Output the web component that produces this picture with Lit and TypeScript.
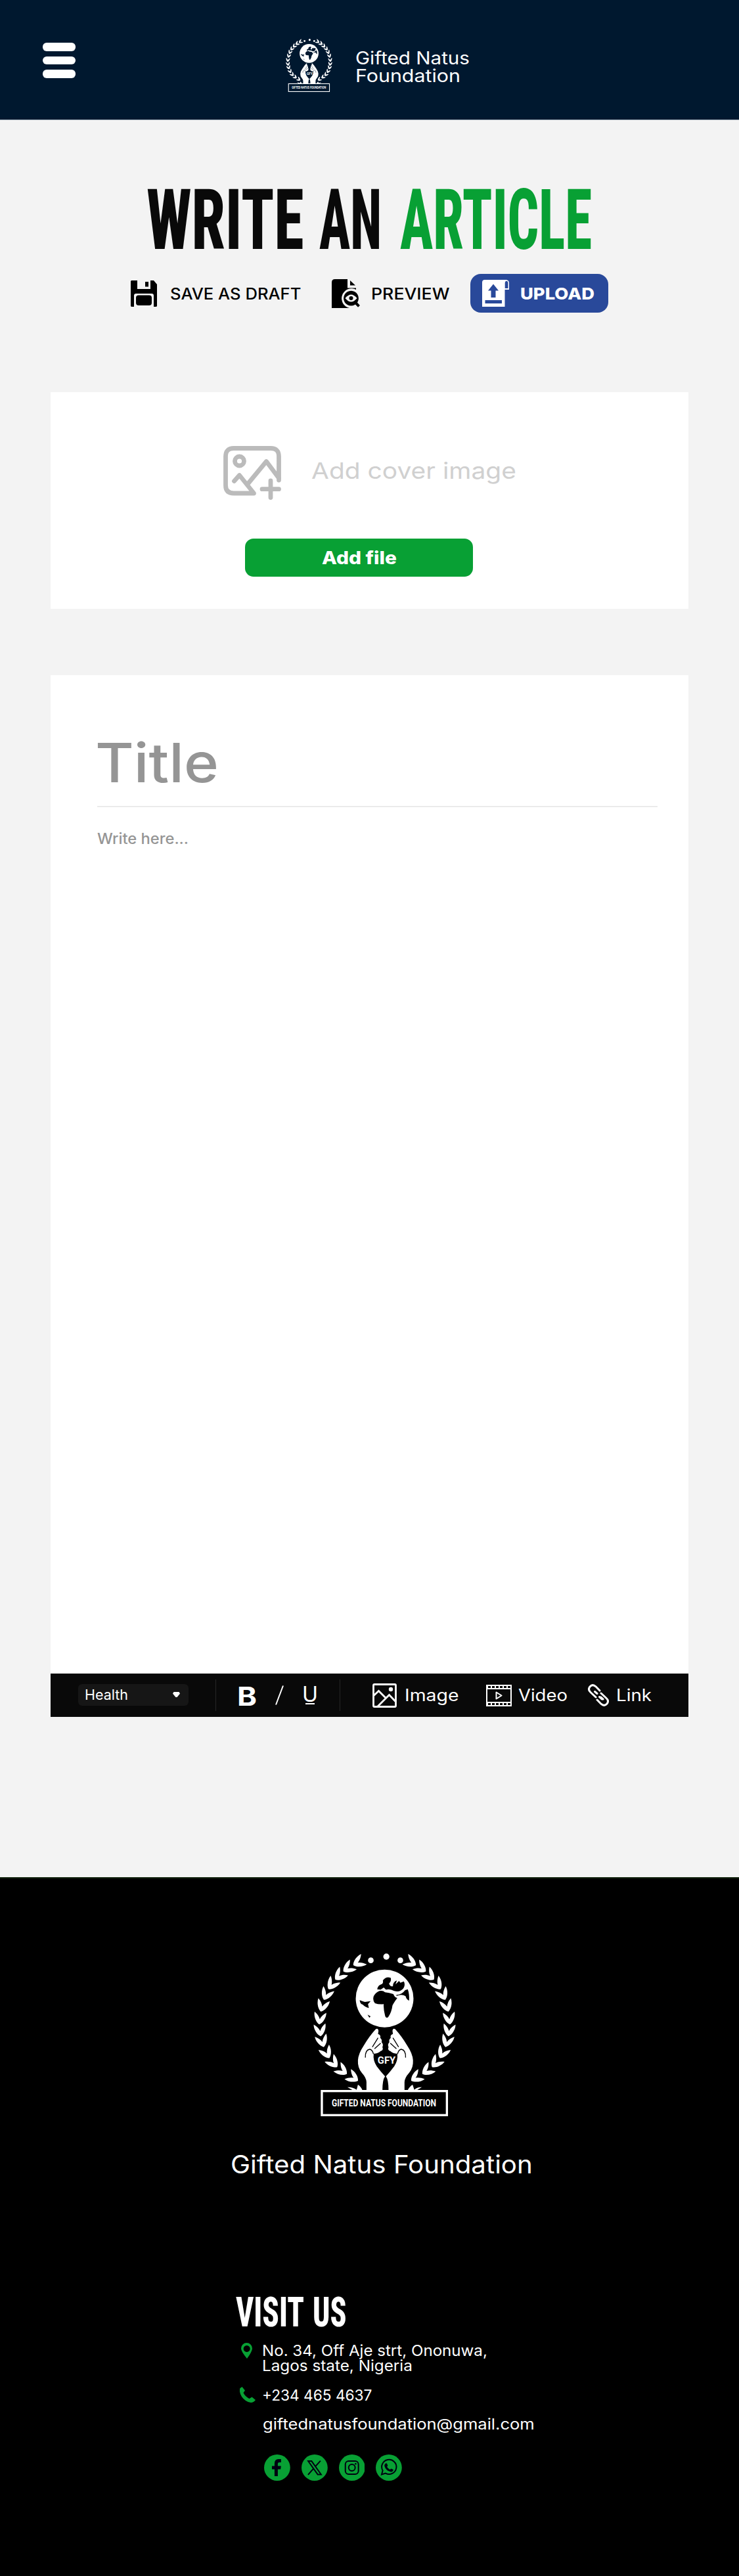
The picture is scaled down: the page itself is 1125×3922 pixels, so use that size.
import { LitElement, html, css, svg } from "lit";
import { customElement, property } from "lit/decorators.js";

/** One line of text scaled horizontally to an exact measure, so that every label keeps its width. */
@customElement("fit-text")
class FitText extends LitElement {
  @property() text = "";
  @property({ type: Number }) w = 100;
  @property({ type: Number }) size = 24;
  @property({ type: Number }) h = 26;
  @property({ type: Number }) base = 20;
  @property({ type: Number }) pad = 1;
  static styles = css`
    :host { display: block; flex: none; line-height: 0; }
    svg { display: block; overflow: visible; }
    text { fill: currentColor; white-space: pre; }
  `;
  updated() {
    const el = this.renderRoot.querySelector("text") as SVGTextElement;
    const natural = el.getComputedTextLength();
    if (!natural) return;
    const k = (this.w + 2 * this.pad) / natural;
    el.setAttribute("transform", `translate(${-this.pad} ${this.base}) scale(${k} 1)`);
  }
  render() {
    return html`<svg width=${this.w} height=${this.h}>
      <text font-size=${this.size}>${this.text}</text>
    </svg>`;
  }
}

const LEAVES: [number, number][] = [
  [290, 112], [243, 138], [203, 172], [168, 212], [142, 258], [124, 310], [112, 368],
  [113, 422], [122, 472], [142, 525], [172, 570], [212, 606], [262, 638],
];

@customElement("foundation-logo")
class FoundationLogo extends LitElement {
  static styles = css`
    :host { display: block; flex: none; }
    svg { display: block; width: 100%; height: 100%; overflow: visible; }
    .ink { fill: #fff; }
    .cut { fill: var(--logo-bg, #000); }
    .line { fill: none; stroke: var(--logo-bg, #000); stroke-width: 4; }
    .frame { fill: none; stroke: #fff; stroke-width: 10; }
    text { fill: #fff; font-family: Roboto, sans-serif; font-weight: 700; }
  `;
  private wreath() {
    return LEAVES.map(([x, y], i) => {
      const a = LEAVES[Math.max(0, i - 1)];
      const b = LEAVES[Math.min(LEAVES.length - 1, i + 1)];
      const turn = (Math.atan2(b[1] - a[1], b[0] - a[0]) * 180) / Math.PI - 90;
      return svg`<path class="ink" transform="translate(${x} ${y}) rotate(${turn})"
        d="M-27-27C-29-6-17 20 0 29C17 20 29-6 27-27C14-18 5-8 0 5C-5-8-14-18-27-27Z"/>`;
    });
  }
  private hand() {
    return svg`
      <path class="ink" d="M368 418Q378 412 380 426L378 440Q392 444 388 458Q398 466 394 478Q404 488 398 500Q404 514 390 518Q378 530 358 530Q354 560 372 588Q390 612 410 634Q398 650 398 697H325V660Q324 640 304 618Q284 594 286 560Q288 530 312 494Q340 448 368 418Z"/>
      <path class="line" d="M320 548Q318 514 340 510Q352 512 357 532M352 500L378 458M362 508L390 482"/>`;
  }
  render() {
    return html`<svg viewBox="82 72 652 744" preserveAspectRatio="none">
      ${svg`<g>${this.wreath()}</g>
      <g transform="matrix(-1 0 0 1 816 0)">${this.wreath()}</g>
      <path class="ink" d="M238 683Q262 682 280 695L286 672Q300 680 306 697H262ZM578 683Q556 682 544 695L536 672Q522 680 514 697H556Z"/>
      <circle class="ink" cx="345" cy="104" r="13"/><circle class="ink" cx="416" cy="87" r="14"/><circle class="ink" cx="480" cy="104" r="13"/>
      <circle class="ink" cx="408" cy="278" r="132"/>
      <path class="cut" d="M384 244Q400 240 410 250Q428 252 448 258Q454 274 466 276Q452 294 444 310Q440 342 424 364Q414 370 410 356Q402 326 404 304Q380 306 364 300Q352 286 358 268Q366 252 384 244Z"/>
      <path class="cut" d="M374 236Q378 218 392 214Q404 210 400 196Q414 176 436 184Q440 200 428 210Q434 226 446 222Q446 202 464 196L458 214L474 198L480 206L496 200Q504 214 494 232Q478 252 452 244Q432 232 414 238L404 228L390 238Z"/>
      <path class="cut" d="M462 262Q486 262 502 240L514 236Q522 258 520 288Q508 284 504 268Q488 256 462 266Z"/>
      <path class="cut" d="M294 286Q310 292 318 294L344 290L332 304L336 322Q316 316 308 306Q296 304 294 286ZM330 352L344 360L338 366Z"/>
      ${this.hand()}
      <g transform="matrix(-1 0 0 1 824 0)">${this.hand()}</g>
      <text x="376" y="576" font-size="44" textLength="82" lengthAdjust="spacingAndGlyphs">GFY</text>
      <rect class="frame" x="121" y="701" width="572" height="110"/>
      <text x="166" y="770" font-size="46" textLength="478" lengthAdjust="spacingAndGlyphs">GIFTED NATUS FOUNDATION</text>`}
    </svg>`;
  }
}

const saveIcon = html`<svg width="40" height="40" viewBox="0 0 40 40">
  <path d="M1 0H10V13H30V0H35L40 6V39L39 40H35V23Q35 20 32 20H8Q5 20 5 23V40H1L0 39V1Z"/>
  <rect x="22" y="2" width="5" height="7.5"/><rect x="8" y="22.500" width="24" height="15.500" rx="4"/></svg>`;

const previewIcon = html`<svg width="43" height="44" viewBox="0 0 43 44">
  <path d="M5 0H24V13.500H37V16A15 15 0 1 0 27 44H0V5Q0 0 5 0Z"/><path d="M28 2L36 9.500H28Z"/>
  <path fill-rule="evenodd" d="M29.500 17.800a11.400 11.400 0 1 0 .01 0ZM20.500 29Q29.500 18 38.500 29Q29.500 40 20.500 29Z"/>
  <circle cx="29.500" cy="29" r="3"/><path d="M35 34.500L41.500 41.300" stroke="#000" stroke-width="4"/></svg>`;

const uploadIcon = html`<svg width="41" height="41" viewBox="0 0 41 41">
  <path fill="#fff" d="M4 0H37Q41 1 41 5V15H34.500V41H0V4Q0 0 4 0Z"/>
  <path fill="#29499a" d="M34.700 13V4.500Q35 1.800 37 1.800Q39.300 2 39.500 4.500V13ZM17 6.500L25 16.500H20.500V27H13.500V16.500H9ZM4.500 31H30V36H4.500Z"/></svg>`;

const coverIcon = html`<svg class="cover-icon" width="88" height="82" viewBox="0 0 88 82">
  <path d="M84.500 52V16Q84.500 3.500 72 3.500H16Q3.500 3.500 3.500 16V60Q3.500 72 16 72H46.500L24.500 44.500L16.500 53.500M37 58L65.500 23.500L84.500 49M72 53V78.500M59 65.700H84.500"/>
  <circle cx="24.500" cy="23" r="7"/></svg>`;

const imageIcon = html`<svg class="line-icon" width="37" height="37" viewBox="0 0 37 37">
  <rect x="1.500" y="1.500" width="34" height="34" rx="1.500"/><path d="M2 18.500L9.500 11.500L20.500 22.500M7.500 35.500L25.500 17.500L35.500 28"/>
  <circle class="solid" cx="28" cy="9" r="3.200"/></svg>`;

const videoIcon = html`<svg class="line-icon" width="39" height="33" viewBox="0 0 39 33">
  <path stroke-width="2" d="M1 0V33M38 0V33M0 1H39M0 6H39M0 27H39M0 32H39"/>
  <path stroke-width="3" stroke-dasharray="2 4" d="M1 3.500H39M1 29.500H39"/>
  <path stroke-width="2" stroke-linejoin="round" d="M15.500 11.500V21.500L23.500 16.500Z"/></svg>`;

const linkIcon = html`<svg class="line-icon" width="32" height="34" viewBox="0 0 32 34">
  <path stroke-width="3" stroke-linecap="round" d="M18 10L12 3.800Q7 -.500 3 4Q-.500 8.500 4 12.500L12 20M14 24L20 30.200Q25 34.500 29 30Q32.500 25.500 28 21.500L20 14M10.500 11.500L14 14.500M17.500 19.500L21.500 23M19.500 20L23 23"/></svg>`;

const pinIcon = html`<svg class="green" width="17" height="24" viewBox="0 0 17 24">
  <path fill-rule="evenodd" d="M8.500 0A8.500 8.500 0 0 1 17 8.500Q17 13 9 24Q0 13 0 8.500A8.500 8.500 0 0 1 8.500 0ZM8.700 4A5 5 0 1 0 8.710 4Z"/></svg>`;

const phoneIcon = html`<svg class="green" width="24" height="24" viewBox="0 0 24 24">
  <path d="M3.500 0L8 5.500L5.500 9Q8 14.500 14.500 18L18.500 15.500L24 20Q21 24 17 24Q8 22.500 3 15Q-1.500 7.500 .500 2Z"/></svg>`;

const socials = [
  html`<svg viewBox="0 0 40 40"><circle cx="20" cy="20" r="20"/><path class="dark" d="M16 33V22.500H12V17.500H16V14Q16 7 22 7H26V12H23.500Q21 12 21 14.500V17.500H26L25.300 22.500H21V33Z"/></svg>`,
  html`<svg viewBox="0 0 40 40"><circle cx="20" cy="20" r="20"/><path class="dark-line" d="M10.200 10H15.400L30 30.500H24.800ZM29 9.500L21.500 17.900M18.200 21.700L10 31"/></svg>`,
  html`<svg viewBox="0 0 40 40"><circle cx="20" cy="20" r="20"/><rect class="dark-line" x="9.800" y="10" width="20" height="20" rx="5"/><circle class="dark-line" cx="19.800" cy="20" r="5"/><circle class="dark" cx="25.500" cy="14.300" r="1.300"/></svg>`,
  html`<svg viewBox="0 0 40 40"><circle cx="20" cy="20" r="20"/><path class="dark-line" d="M9 30.500L10.700 24.500A11.200 11.200 0 1 1 15 28.700Z"/><path class="dark" d="M15 13.500H17L18.500 17L17.200 18.800Q18.800 21.700 21.800 23L23.500 21.500L27 23Q26.500 26.500 23.500 26.500Q15.500 25 13.500 18Q13 15.500 15 13.500Z"/></svg>`,
];

@customElement("app-root")
class AppRoot extends LitElement {
  static styles = css`
    :host { display: block; width: 1125px; height: 3922px; background: #f3f3f3; color: #000;
      font-family: Inter, "Liberation Sans", sans-serif; font-weight: 400; overflow: hidden; }
    * { box-sizing: border-box; }
    svg { display: block; flex: none; }
    header { height: 183px; background: #00182f; border-bottom: 1px solid #a9b2bd; display: flex;
      align-items: flex-start; padding-left: 65px; color: #fff; }
    .menu { display: flex; flex-direction: column; gap: 8px; width: 50px; margin: 65px 320px 0 0; }
    .menu span { height: 12.500px; border-radius: 6px; background: #fff; }
    .logo-sm { width: 71px; height: 81px; margin: 59px 36px 0 0; --logo-bg: #00182f; }
    .brand { margin-top: 76px; }
    .heading { display: flex; padding: 104px 0 0 225px; font-family: Roboto, sans-serif;
      font-stretch: 75%; font-weight: 800; color: #090909; }
    .heading .an { margin: 0 31px 0 27.500px; }
    .heading .accent { color: #08a034; }
    .actions { display: flex; align-items: center; height: 59px; margin-top: 38px; padding-left: 199px; font-weight: 450; }
    .actions .draft { margin-left: 21px; }
    .actions .preview { margin-left: 47.500px; margin-right: 17.500px; }
    .upload { display: flex; align-items: center; width: 210px; height: 59px; margin-left: 33px; padding-left: 18px;
      gap: 17.500px; border-radius: 16px; background: #29499a; color: #fff; font-weight: 800; }
    .card { width: 971px; margin-left: 77px; background: #fff; }
    .cover { height: 330px; margin-top: 121px; padding-top: 82px; }
    .cover-row { display: flex; padding-left: 263px; gap: 47px; color: #d0d0d0; height: 82px; }
    .cover-icon { fill: none; stroke: #bbb; stroke-width: 6.800; stroke-linecap: round; stroke-linejoin: round; }
    .add { display: flex; justify-content: center; align-items: center; width: 347px; height: 58px; margin: 59px 0 0 296px;
      border-radius: 13px; background: #08a034; color: #fff; font-weight: 800; }
    .editor { height: 1520px; margin-top: 101px; padding: 95px 0 0 71px; color: #959595; font-weight: 450; }
    .rule { width: 853px; height: 2px; background: #ebebeb; margin: 31px 0 36px; }
    .bar { display: flex; align-items: center; width: 971px; height: 66px; margin-left: 77px; padding-left: 42px;
      background: #090909; color: #fff; }
    .select { display: flex; align-items: center; justify-content: space-between; width: 168px; height: 33px;
      padding: 0 13px 0 11px; border-radius: 6px; background: #161616; margin-right: 41px; margin-top: -2px; }
    .select svg { fill: #fff; }
    .sep { width: 1px; height: 48px; background: #262626; }
    .line-icon { fill: none; stroke: #fff; stroke-width: 2.800; }
    .line-icon .solid { fill: #fff; stroke: none; }
    .bold { font-weight: 700; margin: 0 30px 0 34px; }
    .glyphs { fill: none; stroke: #fff; stroke-width: 2; margin-right: 30px; }
    .under { display: flex; flex-direction: column; align-items: center; gap: 2px; margin-right: 35px; }
    .under i { width: 14px; height: 2px; background: #fff; }
    .m-image { margin-left: 49px; margin-right: 13px; }
    .m-video { margin-left: 42.500px; margin-right: 11px; }
    .m-link { margin-left: 32px; margin-right: 12px; }
    footer { background: #000; border-top: 2px solid #14240f; color: #fff; margin-top: 244px; height: 1064px; padding-top: 114px; }
    .logo-lg { width: 217px; height: 248px; margin-left: 477px; }
    .name { margin: 56px 0 0 352px; }
    .visit { display: flex; gap: 16px; margin: 180px 0 0 360px; font-family: Roboto, sans-serif; font-stretch: 75%; font-weight: 800; }
    .contact { display: grid; grid-template-columns: 35px 1fr; margin: 25px 0 0 365px; }
    .contact .green { fill: #08a034; }
    .contact .pin { padding-left: 2px; }
    .socials { display: flex; gap: 17px; margin: 36px 0 0 402px; }
    .socials svg { width: 39.800px; height: 40px; fill: #08a034; }
    .socials .dark { fill: #001; }
    .socials .dark-line { fill: none; stroke: #001; stroke-width: 2; }
    .row { height: 26px; }
    .row.address { height: 67px; }
    .row.phone { height: 41px; }
  `;
  render() {
    return html`
      <header>
        <div class="menu"><span></span><span></span><span></span></div>
        <foundation-logo class="logo-sm"></foundation-logo>
        <div class="brand">
          <fit-text text="Gifted Natus" w="172" size="27" h="26.5" base="22"></fit-text>
          <fit-text text="Foundation" w="158" size="27" h="26.5" base="22"></fit-text>
        </div>
      </header>
      <div class="heading">
        <fit-text text="WRITE" w="235.500" size="128.500" h="92" base="92" pad="2"></fit-text>
        <fit-text class="an" text="AN" w="91" size="128.500" h="92" base="92" pad="2"></fit-text>
        <fit-text class="accent" text="ARTICLE" w="290" size="128.500" h="92" base="92" pad="1"></fit-text>
      </div>
      <div class="actions">
        ${saveIcon}
        <fit-text class="draft" text="SAVE AS DRAFT" w="197.500" size="24" h="18" base="18"></fit-text>
        <div class="preview">${previewIcon}</div>
        <fit-text text="PREVIEW" w="117.500" size="24" h="18" base="18"></fit-text>
        <div class="upload">${uploadIcon}<fit-text text="UPLOAD" w="111" size="25" h="18" base="18"></fit-text></div>
      </div>
      <section class="card cover">
        <div class="cover-row">${coverIcon}<fit-text text="Add cover image" w="310" size="34.500" h="60" base="50"></fit-text></div>
        <div class="add"><fit-text text="Add file" w="112" size="27" h="20" base="20"></fit-text></div>
      </section>
      <section class="card editor">
        <fit-text text="Title" w="182" size="83" h="73" base="68" pad="3"></fit-text>
        <div class="rule"></div>
        <fit-text text="Write here..." w="139" size="23" h="24" base="20" pad="0"></fit-text>
      </section>
      <div class="bar">
        <div class="select"><fit-text text="Health" w="64" size="21" h="16" base="16"></fit-text>
          <svg width="11" height="8" viewBox="0 0 11 8"><path d="M1.500 0H9.500L11 2.500L7 7.500Q5.500 8.500 4 7.500L0 2.500Z"/></svg></div>
        <div class="sep"></div>
        <fit-text class="bold" text="B" w="26" size="40" h="29" base="29.500" pad="2"></fit-text>
        <svg class="glyphs" width="13" height="30"><path d="M1 29.500L12 .500"/></svg>
        <div class="under"><fit-text text="U" w="20" size="32" h="23" base="23" pad="2"></fit-text><i></i></div>
        <div class="sep"></div>
        <div class="m-image">${imageIcon}</div><fit-text text="Image" w="80.500" size="25.500" h="19" base="18"></fit-text>
        <div class="m-video">${videoIcon}</div><fit-text text="Video" w="73" size="25.500" h="19" base="18"></fit-text>
        <div class="m-link">${linkIcon}</div><fit-text text="Link" w="52" size="25.500" h="19" base="18"></fit-text>
      </div>
      <footer>
        <foundation-logo class="logo-lg"></foundation-logo>
        <fit-text class="name" text="Gifted Natus Foundation" w="458" size="38" h="40" base="31"></fit-text>
        <div class="visit">
          <fit-text text="VISIT" w="102" size="62.500" h="44" base="44"></fit-text>
          <fit-text text="US" w="47.500" size="62.500" h="44" base="44" pad="2"></fit-text>
        </div>
        <div class="contact">
          <div class="pin">${pinIcon}</div>
          <div class="row address">
            <fit-text text="No. 34, Off Aje strt, Ononuwa," w="341" size="23" h="23" base="20"></fit-text>
            <fit-text text="Lagos state, Nigeria" w="227" size="23" h="23" base="20"></fit-text>
          </div>
          <div>${phoneIcon}</div>
          <div class="row phone"><fit-text text="+234 465 4637" w="165.500" size="23" h="23" base="20.500"></fit-text></div>
          <div></div>
          <div class="row"><fit-text text="giftednatusfoundation@gmail.com" w="414" size="23" h="24" base="23.500" pad="0"></fit-text></div>
        </div>
        <div class="socials">${socials}</div>
      </footer>
    `;
  }
}
